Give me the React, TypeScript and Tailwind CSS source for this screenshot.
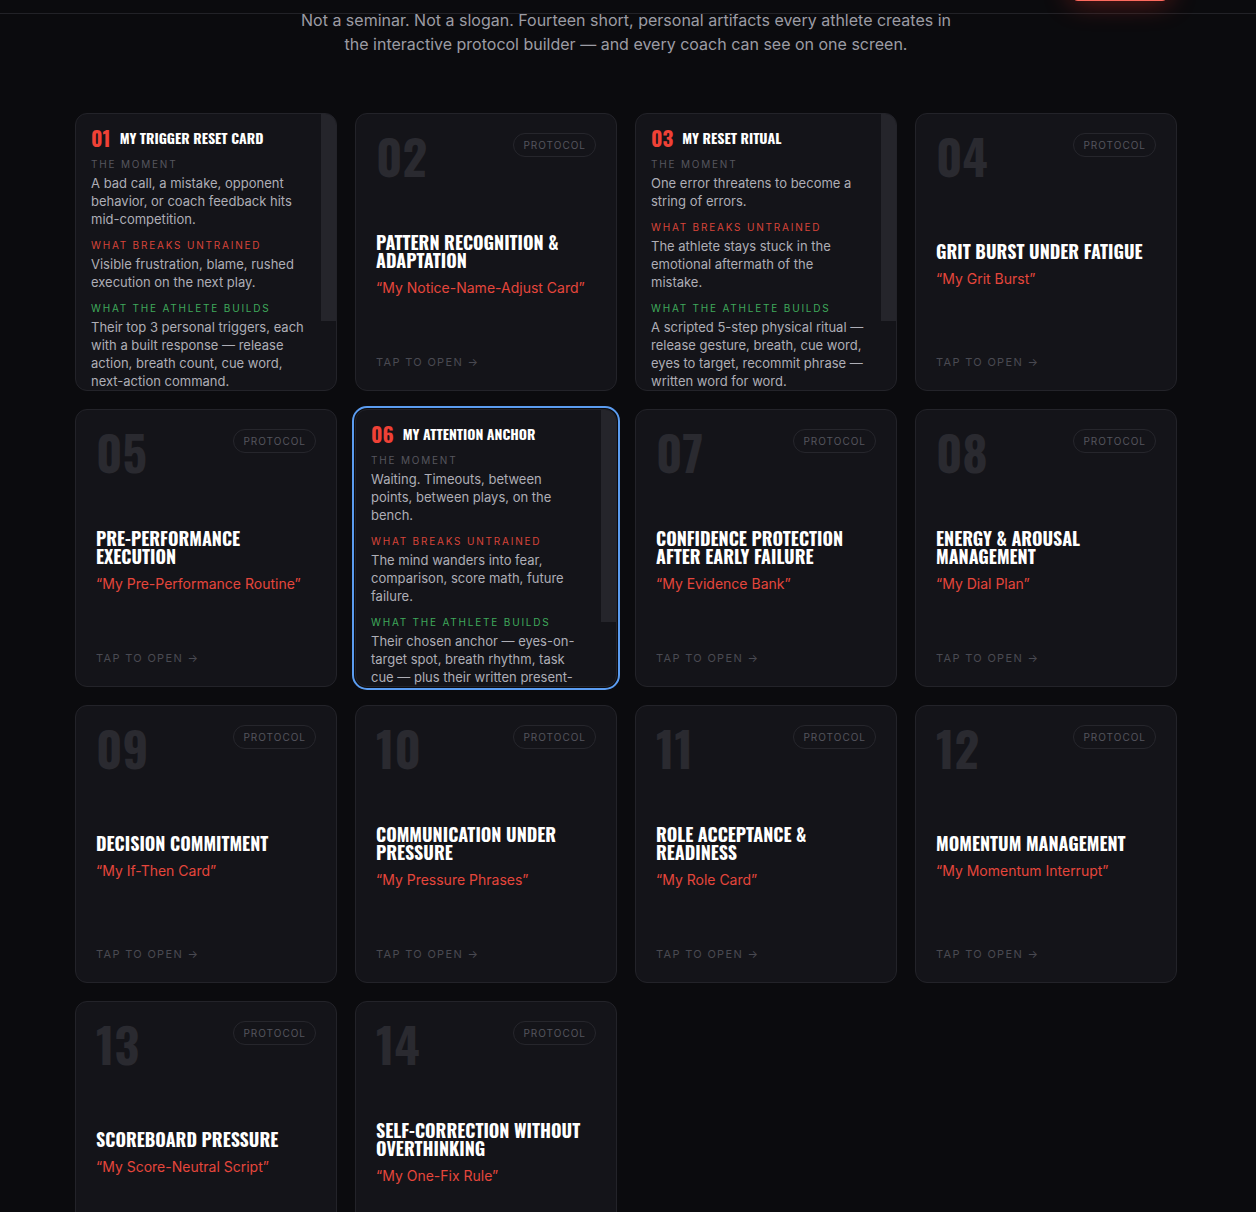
import React from "react";

type OpenCard = {
  n: string;
  name: string;
  moment: string;
  breaks: string;
  builds: string;
  thumb: number;
  selected?: boolean;
};

type ClosedCard = {
  n: string;
  title: string;
  artifact: string;
};

type Card = ({ kind: "open" } & OpenCard) | ({ kind: "closed" } & ClosedCard);

const cards: Card[] = [
  {
    kind: "open",
    n: "01",
    name: "My Trigger Reset Card",
    moment: "A bad call, a mistake, opponent behavior, or coach feedback hits mid-competition.",
    breaks: "Visible frustration, blame, rushed execution on the next play.",
    builds:
      "Their top 3 personal triggers, each with a built response — release action, breath count, cue word, next-action command.",
    thumb: 207,
  },
  { kind: "closed", n: "02", title: "Pattern Recognition & Adaptation", artifact: "My Notice-Name-Adjust Card" },
  {
    kind: "open",
    n: "03",
    name: "My Reset Ritual",
    moment: "One error threatens to become a string of errors.",
    breaks: "The athlete stays stuck in the emotional aftermath of the mistake.",
    builds:
      "A scripted 5-step physical ritual — release gesture, breath, cue word, eyes to target, recommit phrase — written word for word.",
    thumb: 207,
  },
  { kind: "closed", n: "04", title: "Grit Burst Under Fatigue", artifact: "My Grit Burst" },
  { kind: "closed", n: "05", title: "Pre-Performance Execution", artifact: "My Pre-Performance Routine" },
  {
    kind: "open",
    n: "06",
    name: "My Attention Anchor",
    moment: "Waiting. Timeouts, between points, between plays, on the bench.",
    breaks: "The mind wanders into fear, comparison, score math, future failure.",
    builds:
      "Their chosen anchor — eyes-on-target spot, breath rhythm, task cue — plus their written present-moment phrase.",
    thumb: 212,
    selected: true,
  },
  { kind: "closed", n: "07", title: "Confidence Protection After Early Failure", artifact: "My Evidence Bank" },
  { kind: "closed", n: "08", title: "Energy & Arousal Management", artifact: "My Dial Plan" },
  { kind: "closed", n: "09", title: "Decision Commitment", artifact: "My If-Then Card" },
  { kind: "closed", n: "10", title: "Communication Under Pressure", artifact: "My Pressure Phrases" },
  { kind: "closed", n: "11", title: "Role Acceptance & Readiness", artifact: "My Role Card" },
  { kind: "closed", n: "12", title: "Momentum Management", artifact: "My Momentum Interrupt" },
  { kind: "closed", n: "13", title: "Scoreboard Pressure", artifact: "My Score-Neutral Script" },
  { kind: "closed", n: "14", title: "Self-Correction Without Overthinking", artifact: "My One-Fix Rule" },
];

const display = "font-['Oswald','Bebas_Neue','Roboto_Condensed',sans-serif]";

function ClosedTile({ c }: { c: ClosedCard }) {
  return (
    <div className="flex h-[278px] flex-col rounded-xl border border-[#232329] bg-[#141419] px-5 pb-5 pt-[19px]">
      <div className="flex h-11 items-start justify-between">
        <span className={`${display} mt-[1px] text-[48px] font-bold leading-[44px] text-[#2a2a30]`}>{c.n}</span>
        <span className="rounded-full border border-[#26262c] px-[9px] py-[5px] text-[10px] leading-3 tracking-[0.1em] text-[#55555d]">
          PROTOCOL
        </span>
      </div>
      <div className="flex flex-1 flex-col justify-center">
        <h3 className={`${display} text-[18px] font-bold uppercase leading-[18px] text-white`}>{c.title}</h3>
        <p className="mt-[9px] text-[14px] leading-5 text-[#e5463c]">“{c.artifact}”</p>
      </div>
      <div className="text-[11px] leading-4 tracking-[0.12em] text-[#4a4a52]">TAP TO OPEN →</div>
    </div>
  );
}

function Section({ label, tone, text }: { label: string; tone: string; text: string }) {
  return (
    <div>
      <div className={`text-[10px] leading-[14px] tracking-[0.18em] ${tone}`}>{label}</div>
      <p className="mt-[3px] text-[13px] leading-[18px] text-[#aeaeb6]">{text}</p>
    </div>
  );
}

function OpenTile({ c }: { c: OpenCard }) {
  return (
    <div
      className={`relative h-[278px] overflow-hidden rounded-xl border border-[#232329] bg-[#141419] ${
        c.selected ? "outline-2 outline-offset-1 outline-[#5b9cf0]" : ""
      }`}
    >
      <div className="pb-4 pl-[15px] pr-[31px] pt-[14px]">
        <div className="flex items-center gap-[9px] leading-5">
          <span className={`${display} text-[21px] font-bold text-[#ef4136]`}>{c.n}</span>
          <span className={`${display} text-[14px] font-bold uppercase text-white`}>{c.name}</span>
        </div>
        <div className="mt-[9px] flex flex-col gap-2.5">
          <Section label="THE MOMENT" tone="text-[#56565e]" text={c.moment} />
          <Section label="WHAT BREAKS UNTRAINED" tone="text-[#d8443a]" text={c.breaks} />
          <Section label="WHAT THE ATHLETE BUILDS" tone="text-[#3fa95b]" text={c.builds} />
        </div>
      </div>
      {/* scroll thumb */}
      <div className="absolute right-0 top-0 w-[15px] bg-[#25252b]" style={{ height: c.thumb }} />
    </div>
  );
}

export default function App() {
  return (
    <div className="min-h-screen bg-[#0b0b0e] font-['Inter',sans-serif] text-white">
      <header className="fixed inset-x-0 top-0 z-10 flex h-[14px] items-end justify-end border-b border-[#222227] bg-[#0b0b0e] pr-[88px]">
        <div className="mb-[12px] h-10 w-24 shrink-0 rounded-md border-b border-[#ff6a5e] bg-[#e0362c] shadow-[0_0_28px_rgba(230,50,40,0.45)]" />
      </header>

      <main className="ml-[75px] w-[1102px] pb-20 pt-2">
        <p className="mx-auto max-w-2xl text-center text-[16px] leading-6 text-[#9c9ca4]">
          Not a seminar. Not a slogan. Fourteen short, personal artifacts every athlete creates in the interactive
          protocol builder — and every coach can see on one screen.
        </p>

        <div className="mt-[57px] grid grid-cols-[repeat(4,262px)] gap-[18px]">
          {cards.map((c) => (c.kind === "open" ? <OpenTile key={c.n} c={c} /> : <ClosedTile key={c.n} c={c} />))}
        </div>
      </main>
    </div>
  );
}
